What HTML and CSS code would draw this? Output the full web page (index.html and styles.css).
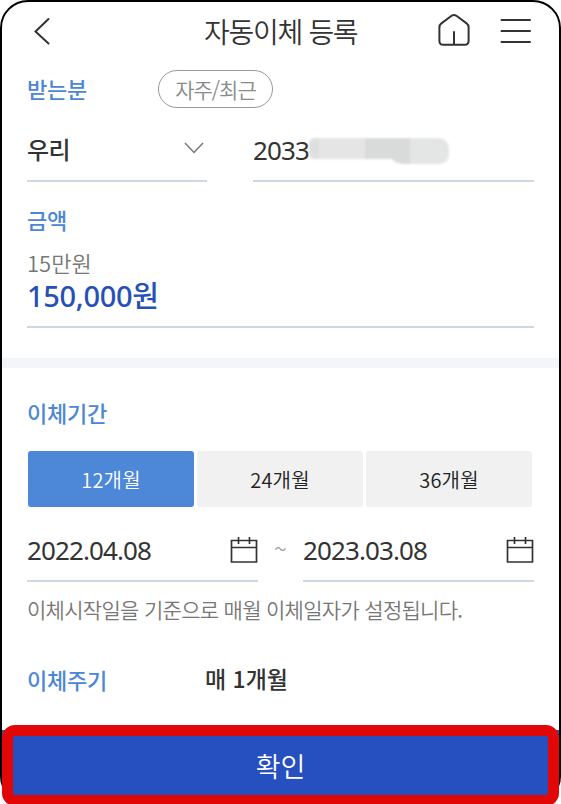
FILE: index.html
```
<!DOCTYPE html>
<html lang="ko">
<head>
    <meta charset="UTF-8">
    <title>자동이체 등록</title>
    <link rel="stylesheet" href="styles.css">
</head>
<body>
<div class="phone">
    <header class="top">
        <svg class="back" width="18" height="30" viewBox="0 0 18 30"><path d="M15.500 3 2.500 15.500l13 12"/></svg>
        <h1><span class="t-title">자동이체 등록</span></h1>
        <svg class="home" width="34" height="34" viewBox="0 0 34 34"><path d="M14.600 2.800q2.400-1.800 4.800 0l10.200 7.600q2 1.500 2 3.800v13.700q0 3.800-3.800 3.800h-21.600q-3.800 0-3.800-3.800v-13.700q0-2.300 2-3.800zM17 19v12.500"/></svg>
        <svg class="menu" width="32" height="28" viewBox="0 0 32 28"><path d="M1.500 3h28.500M1.500 14h28.500M1.500 25h28.500"/></svg>
    </header>

    <section class="send">
        <div class="receiver">
            <h2><span class="t-label">받는분</span></h2>
            <button class="recent"><span class="t-recent">자주/최근</span></button>
        </div>
        <div class="account">
            <div class="field bank">
                <span class="t-bank">우리</span>
                <svg width="20" height="12" viewBox="0 0 20 12"><path d="M1 1l9 9.500 9-9.500"/></svg>
            </div>
            <div class="field number">
                <span class="t-num">2033</span>
                <span class="mask"><i></i></span>
            </div>
        </div>
        <h2 class="amount-title"><span class="t-label">금액</span></h2>
        <div class="amount">
            <p class="small"><span class="t-small">15만원</span></p>
            <p class="big"><span class="t-big">150,000원</span></p>
        </div>
    </section>

    <section class="period">
        <h2><span class="t-label">이체기간</span></h2>
        <div class="tabs">
            <button class="active"><span class="t-tab">12개월</span></button>
            <button><span class="t-tab">24개월</span></button>
            <button><span class="t-tab">36개월</span></button>
        </div>
        <div class="dates">
            <div class="field">
                <span class="t-date">2022.04.08</span>
                <svg width="28" height="28" viewBox="0 0 28 28"><path d="M1.500 4.500h25v21.500h-25zM1.500 11.500h25M8.500 1v7M19.500 1v7"/></svg>
            </div>
            <span class="tilde">~</span>
            <div class="field">
                <span class="t-date">2023.03.08</span>
                <svg width="28" height="28" viewBox="0 0 28 28"><path d="M1.500 4.500h25v21.500h-25zM1.500 11.500h25M8.500 1v7M19.500 1v7"/></svg>
            </div>
        </div>
        <p class="note"><span class="t-note">이체시작일을 기준으로 매월 이체일자가 설정됩니다.</span></p>
        <div class="cycle">
            <h2><span class="t-label">이체주기</span></h2>
            <span class="t-cycle">매 1개월</span>
        </div>
    </section>

    <button class="confirm"><span class="t-confirm">확인</span></button>
</div>
<div class="highlight"></div>
</body>
</html>
```

FILE: styles.css
```
*{
    box-sizing: border-box;
}
body{
    margin: 0;
    position: relative;
    height: 804px;
    overflow: hidden;
    background-color: white;
    color: #333;
    font-family: "Noto Sans CJK KR", sans-serif;
}
h1, h2, p{
    margin: 0;
    font-weight: normal;
}
button{
    border: none;
    padding: 0;
    color: inherit;
    font-family: inherit;
}
svg{
    fill: none;
    stroke: #333;
    stroke-width: 2;
    flex: none;
}
.phone{
    display: flex;
    flex-direction: column;
    height: 804px;
    border: 2px solid black;
    border-radius: 28px;
    overflow: hidden;
}
.top{
    display: flex;
    align-items: center;
    height: 58px;
    padding: 0 27px 0 31px;
}
.top svg{
    stroke-linecap: round;
}
.top h1{
    flex: 1;
    padding-left: 153px;
    line-height: 54px;
    height: 58px;
}
.home{
    margin-bottom: 2px;
}
.menu{
    margin-left: 29px;
}
h2{
    height: 30px;
    color: #4c87d6;
    line-height: 27px;
}
.send{
    height: 298px;
    padding: 10px 25px 0 25px;
}
.receiver{
    display: flex;
    align-items: center;
}
.receiver h2{
    width: 131px;
}
.recent{
    width: 115px;
    height: 38px;
    border: 1.500px solid #999;
    border-radius: 19px;
    background-color: white;
    color: #8a8a8a;
}
.account{
    display: flex;
    gap: 46px;
    margin-top: 12px;
}
.field{
    display: flex;
    align-items: center;
    justify-content: space-between;
    height: 62px;
    border-bottom: 2px solid #ced8e4;
    line-height: 57px;
}
.field > span:first-child{
    height: 60px;
}
.bank{
    width: 180px;
}
.bank svg{
    margin: 0 3px 5px 0;
    stroke: #777;
    stroke-width: 1.500;
}
.number{
    flex: 1;
    justify-content: flex-start;
}
/* smudge over the hidden account digits */
.mask{
    display: flex;
    justify-content: flex-end;
    width: 140px;
    height: 21px;
    margin: 0 0 3px 0;
    border-radius: 6px 12px 12px 6px;
    background: linear-gradient(to right, #dedfdf 10px, #e5e5e5 10px, #e5e5e5 56px, #d9dbdb 56px, #d9dbdb 101px, #e4e6e6 101px);
    filter: blur(1px);
}
.mask i{
    width: 64px;
    height: 22px;
    margin-top: 4px;
    border-radius: 4px 12px 14px 30px;
    background: linear-gradient(to right, #d9dbdb 25px, #e4e6e6 25px);
}
.amount-title{
    margin-top: 24px;
    line-height: 26px;
}
.amount{
    height: 92px;
    padding-top: 13px;
    border-bottom: 2px solid #ced8e4;
}
.small{
    color: #777;
    line-height: 27px;
}
.big{
    color: #264fb8;
    line-height: 33px;
}
.period{
    flex: 1;
    border-top: 10px solid #f3f5fa;
    padding: 30px 25px 0 25px;
}
.tabs{
    display: flex;
    gap: 3px;
    margin: 23px 2px 0 1px;
}
.tabs button{
    flex: 1;
    height: 56px;
    border-radius: 3px;
    background-color: #f1f1f1;
    color: #222;
}
.tabs .active{
    background-color: #4c87d8;
    color: white;
}
.dates{
    display: flex;
    margin-top: 12px;
}
.dates .field{
    width: 231px;
    height: 63px;
}
.dates svg{
    stroke-width: 1.700;
}
.tilde{
    flex: 1;
    color: #999;
    font-size: 24px;
    font-weight: 300;
    line-height: 58px;
    text-align: center;
}
.note{
    color: #777;
    margin-top: 13px;
    line-height: 28px;
}
.cycle{
    display: flex;
    margin-top: 41px;
    line-height: 24px;
}
.cycle h2{
    width: 178px;
    line-height: 25px;
}
.confirm{
    height: 72px;
    padding-bottom: 1px;
    background-color: #264fc0;
    color: white;
}
.highlight{
    position: absolute;
    left: 2px;
    top: 725px;
    width: 557px;
    height: 81px;
    border: 11px solid #e20707;
    border-radius: 13px;
}

.t-title{
    font-size: 28px;
    font-weight: 350;
    letter-spacing: -1.3px;
}
.t-label{
    font-size: 22px;
    font-weight: 500;
    letter-spacing: -0.2px;
}
.t-recent{
    font-size: 21px;
    font-weight: 350;
    letter-spacing: -1px;
}
.t-bank{
    font-size: 24px;
    font-weight: 500;
    letter-spacing: -0.5px;
}
.t-num, .t-date{
    font-family: "Noto Sans", sans-serif;
    font-size: 26px;
    letter-spacing: -0.9px;
    line-height: 60px;
}
.t-small{
    font-size: 22px;
    font-weight: 350;
}
.t-big{
    font-family: "Noto Sans", "Noto Sans CJK KR", sans-serif;
    font-size: 29px;
    font-weight: 500;
    letter-spacing: -0.3px;
}
.t-tab{
    font-size: 20px;
    font-weight: 350;
    letter-spacing: 0.2px;
}
.t-note{
    font-size: 21px;
    font-weight: 350;
    letter-spacing: -0.7px;
}
.t-cycle{
    font-size: 23px;
    font-weight: 500;
}
.t-confirm{
    font-size: 27px;
    font-weight: 350;
}
```
